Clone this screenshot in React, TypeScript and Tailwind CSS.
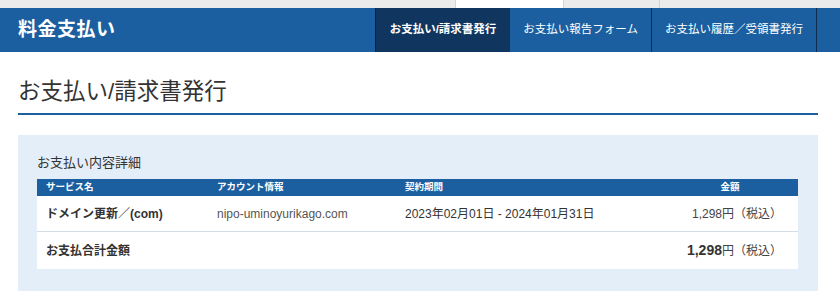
import React from "react";

const font = { fontFamily: '"Liberation Sans", "Noto Sans CJK JP", sans-serif' };

const navItems = [
  { label: "お支払い/請求書発行", active: true },
  { label: "お支払い報告フォーム", active: false },
  { label: "お支払い履歴／受領書発行", active: false },
];

const App: React.FC = () => {
  return (
    <div className="w-[840px] h-[302px] bg-white text-[#333] overflow-hidden" style={font}>
      {/* browser strip */}
      <div className="flex h-[8px] bg-[#ebebeb]">
        <div className="w-[456px] border-r border-[#d4d4d4]" />
        <div className="w-[108px] bg-white border-r border-[#d4d4d4]" />
        <div className="w-[96px] border-r border-[#d4d4d4]" />
      </div>

      {/* header */}
      <header className="flex h-[44px] bg-[#1b5fa0] text-white">
        <h1 className="pl-[18px] flex items-center text-[19px] font-bold tracking-[0.5px] flex-1">料金支払い</h1>
        <nav className="flex">
          {navItems.map((item) => (
            <a
              key={item.label}
              className={
                item.active
                  ? "flex items-center px-[14px] text-[11.5px] font-bold bg-[#10365f] border-l border-[#0a2440]"
                  : "flex items-center px-[13px] text-[11.5px] border-r border-[#0d2c4f]"
              }
            >
              {item.label}
            </a>
          ))}
        </nav>
        <div className="w-[23px]" />
      </header>

      <main className="ml-[18px] w-[800px]">
        <h2 className="pt-[25px] pb-[6px] text-[22.5px] leading-[30px] border-b-2 border-[#1b5fa0] text-[#333]">
          お支払い/請求書発行
        </h2>

        <section className="mt-[20px] bg-[#e4eef8] pl-[19px] pr-[20px] pt-[18px] pb-[22px]">
          <h3 className="text-[13px] leading-[20px] mb-[6px] text-[#333]">お支払い内容詳細</h3>

          <div className="bg-white">
            <div className="grid grid-cols-[171px_188px_1fr_136px] h-[17px] bg-[#1b5fa0] text-white text-[9.5px] font-bold items-center">
              <div className="pl-[9px]">サービス名</div>
              <div className="pl-[9px]">アカウント情報</div>
              <div className="pl-[9px]">契約期間</div>
              <div className="text-center">金額</div>
            </div>
            <div className="grid grid-cols-[171px_188px_1fr_136px] h-[36px] items-center text-[12px] border-b border-[#d5dde6]">
              <div className="pl-[9px] font-bold text-[#333]">ドメイン更新／(com)</div>
              <div className="pl-[9px] text-[#555]">nipo-uminoyurikago.com</div>
              <div className="pl-[9px] text-[#333]">2023年02月01日 - 2024年01月31日</div>
              <div className="pr-[16px] text-right text-[#444]">1,298円（税込）</div>
            </div>
            <div className="flex h-[37px] items-center justify-between text-[12px]">
              <div className="pl-[9px] font-bold text-[#333]">お支払合計金額</div>
              <div className="pr-[16px] text-[#444]">
                <span className="text-[14px] font-bold text-[#333]">1,298</span>円（税込）
              </div>
            </div>
          </div>
        </section>
      </main>
    </div>
  );
};

export default App;
